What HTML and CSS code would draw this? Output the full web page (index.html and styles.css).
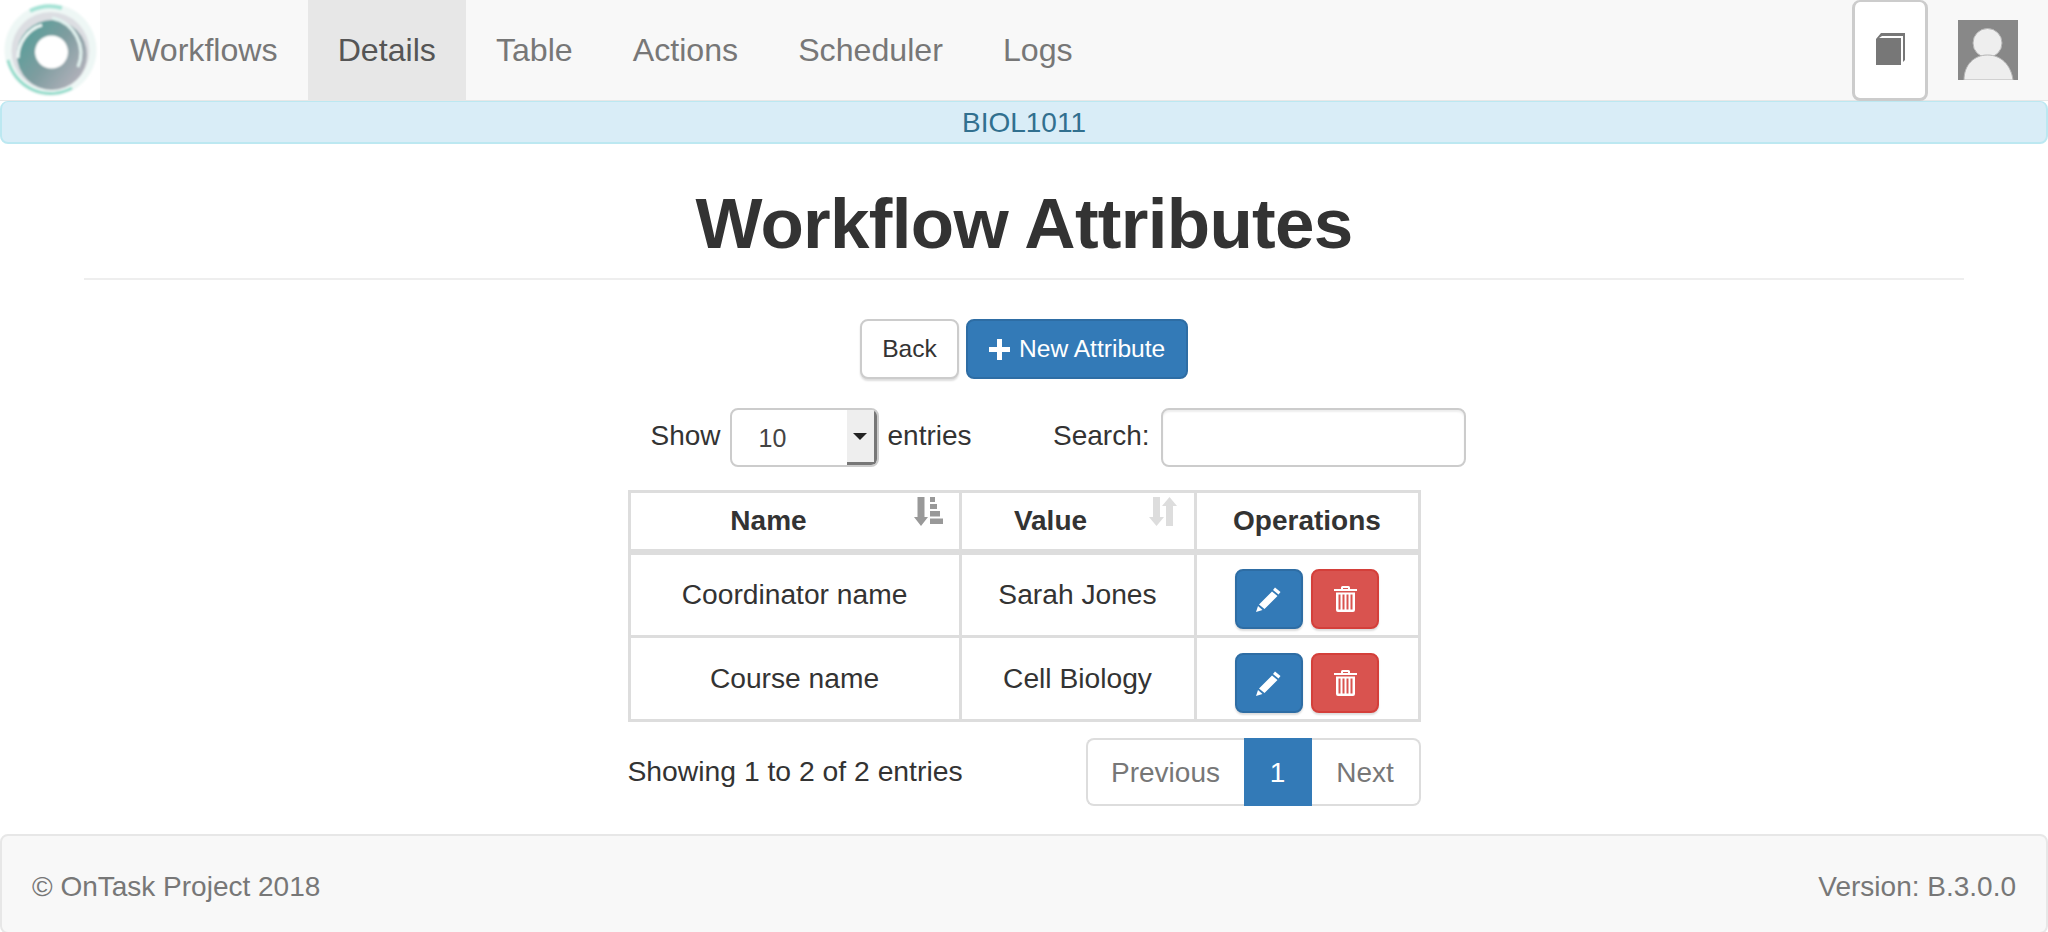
FILE: index.html
```html
<!DOCTYPE html>
<html lang="en">
<head>
    <meta charset="UTF-8">
    <meta name="viewport" content="width=device-width, initial-scale=1.0">
    <title>Workflow Attributes</title>
    <link rel="stylesheet" href="styles.css">
</head>
<body>
    <!-- Barra de navegacion -->
    <nav class="navbar">
        <a class="brand" href="#">
            <svg width="100" height="100" viewBox="0 0 100 100">
                <defs>
                    <filter id="soft" x="-20%" y="-20%" width="140%" height="140%"><feGaussianBlur stdDeviation="1.3"/></filter>
                    <linearGradient id="disc" x1="0.1" y1="0.2" x2="0.9" y2="0.8">
                        <stop offset="0" stop-color="#5a9f9a"/>
                        <stop offset="0.5" stop-color="#7f9da0"/>
                        <stop offset="1" stop-color="#afb0b9"/>
                    </linearGradient>
                </defs>
                <g filter="url(#soft)">
                    <circle cx="50.500" cy="50" r="46" fill="#eef7f5"/>
                    <path d="M8 60 A44 44 0 0 0 72 88" fill="none" stroke="#93dccb" stroke-width="3"/>
                    <path d="M30 11 A44 44 0 0 1 62 8" fill="none" stroke="#a5e3d6" stroke-width="4"/>
                    <circle cx="50.500" cy="51" r="39" fill="#dcdee2"/>
                    <circle cx="52" cy="55" r="35" fill="url(#disc)"/>
                    <path d="M18 58 A33 34 0 0 1 42 25" fill="none" stroke="#eef8f6" stroke-width="3"/>
                    <path d="M52 18 A36 36 0 0 1 78 67" fill="none" stroke="#e2f3f0" stroke-width="3"/>
                    <circle cx="51.500" cy="52" r="16.500" fill="#fff"/>
                </g>
            </svg>
        </a>
        <ul class="nav-tabs">
            <li><a href="#">Workflows</a></li>
            <li class="active"><a href="#">Details</a></li>
            <li><a href="#">Table</a></li>
            <li><a href="#">Actions</a></li>
            <li><a href="#">Scheduler</a></li>
            <li><a href="#">Logs</a></li>
        </ul>
        <a class="doc-btn" href="#">
            <svg width="29" height="32" viewBox="0 0 29 32">
                <path d="M0 6 L5 0 H29 V27 L27 29 V3 H6 L3 5 H25 V32 H0 Z" fill="#777"/>
            </svg>
        </a>
        <a class="avatar" href="#">
            <svg width="60" height="60" viewBox="0 0 60 60">
                <rect width="60" height="60" fill="#888"/>
                <circle cx="29.500" cy="23" r="14.500" fill="#eee" stroke="#b5b5b5" stroke-width="1"/>
                <path d="M6 60 C6 45 16 35 29.500 35 C43 35 53 45 55 60 Z" fill="#eee" stroke="#b5b5b5" stroke-width="1"/>
            </svg>
        </a>
    </nav>
    <div class="wf-alert">BIOL1011</div>

    <div class="page-header">
        <h1>Workflow Attributes</h1>
    </div>

    <div class="toolbar">
        <button class="btn btn-default">Back</button>
        <button class="btn btn-primary">
            <svg class="ico-plus" width="21" height="21" viewBox="0 0 21 21"><path d="M8 0 H13 V8 H21 V13 H13 V21 H8 V13 H0 V8 H8 Z" fill="#fff"/></svg>
            New Attribute
        </button>
    </div>

    <div class="dt-wrap">
        <div class="dt-filter">
            <div class="dt-group">
                <span class="dt-label">Show</span>
                <div class="fake-select">
                    <span class="fake-value">10</span>
                    <span class="fake-arrow"><i></i></span>
                </div>
                <span class="dt-label">entries</span>
            </div>
            <div class="dt-group dt-search">
                <span class="dt-label">Search:</span>
                <input type="text">
            </div>
        </div>

        <table class="dt-table">
            <thead>
                <tr>
                    <th class="col-name">Name
                        <svg class="sort-ico sort-on" width="29" height="30" viewBox="0 0 29 30">
                            <path d="M3.500 0 H10.500 V20 H14 L7 29 L0 20 H3.500 Z M16 0 H21 V5 H16 Z M16 7 H23 V12 H16 Z M16 14 H26 V19.500 H16 Z M16 21.500 H29 V27 H16 Z"/>
                        </svg>
                    </th>
                    <th class="col-value">Value
                        <svg class="sort-ico sort-off" width="29" height="30" viewBox="0 0 29 30">
                            <path d="M4 0 H11 V20 H15 L7.500 29 L0 20 H4 Z M17 29 V9 H13 L20.500 0 L28 9 H24 V29 Z"/>
                        </svg>
                    </th>
                    <th class="col-ops">Operations</th>
                </tr>
            </thead>
            <tbody>
                <tr>
                    <td>Coordinator name</td>
                    <td>Sarah Jones</td>
                    <td>
                        <div class="ops">
                            <button class="btn-op btn-primary"><svg width="26" height="26" viewBox="0 0 26 26"><path d="M19 1.500 L24.500 6 L22.500 8.500 L17 4 Z M16 5.500 L21.500 10 L8.500 23 L3 18.500 Z M2 20 L6.500 24 L0 26 Z" fill="#fff"/></svg></button>
                            <button class="btn-op btn-danger"><svg width="23" height="26" viewBox="0 0 23 26"><path fill="#fff" fill-rule="evenodd" d="M7 3 V1.500 Q7 0 8.500 0 H14.500 Q16 0 16 1.500 V3 H23 V5 H0 V3 Z M9 3 H14 V2 H9 Z M2 6.500 H21 V24 Q21 26 19 26 H4 Q2 26 2 24 Z M4.500 8.500 V23.500 H6.500 V8.500 Z M8.500 8.500 V23.500 H10.500 V8.500 Z M12.500 8.500 V23.500 H14.500 V8.500 Z M16.500 8.500 V23.500 H18.500 V8.500 Z"/></svg></button>
                        </div>
                    </td>
                </tr>
                <tr>
                    <td>Course name</td>
                    <td>Cell Biology</td>
                    <td>
                        <div class="ops">
                            <button class="btn-op btn-primary"><svg width="26" height="26" viewBox="0 0 26 26"><path d="M19 1.500 L24.500 6 L22.500 8.500 L17 4 Z M16 5.500 L21.500 10 L8.500 23 L3 18.500 Z M2 20 L6.500 24 L0 26 Z" fill="#fff"/></svg></button>
                            <button class="btn-op btn-danger"><svg width="23" height="26" viewBox="0 0 23 26"><path fill="#fff" fill-rule="evenodd" d="M7 3 V1.500 Q7 0 8.500 0 H14.500 Q16 0 16 1.500 V3 H23 V5 H0 V3 Z M9 3 H14 V2 H9 Z M2 6.500 H21 V24 Q21 26 19 26 H4 Q2 26 2 24 Z M4.500 8.500 V23.500 H6.500 V8.500 Z M8.500 8.500 V23.500 H10.500 V8.500 Z M12.500 8.500 V23.500 H14.500 V8.500 Z M16.500 8.500 V23.500 H18.500 V8.500 Z"/></svg></button>
                        </div>
                    </td>
                </tr>
            </tbody>
        </table>

        <div class="dt-bottom">
            <div class="dt-info">Showing 1 to 2 of 2 entries</div>
            <ul class="pagination">
                <li class="page-prev">Previous</li>
                <li class="page-cur">1</li>
                <li class="page-next">Next</li>
            </ul>
        </div>
    </div>

    <footer class="footer">
        <span>© OnTask Project 2018</span>
        <span>Version: B.3.0.0</span>
    </footer>
</body>
</html>
```

FILE: styles.css
```css
* {
    margin: 0;
    padding: 0;
    box-sizing: border-box;
}

body {
    font-family: "Liberation Sans", Arial, sans-serif;
    font-size: 28px;
    color: #333;
    background-color: #fff;
}

a {
    text-decoration: none;
    color: inherit;
}

/* navbar */
.navbar {
    display: flex;
    height: 101px;
    background-color: #f8f8f8;
    border-bottom: 1px solid #e7e7e7;
}

.brand {
    width: 100px;
    height: 100px;
    background-color: #fff;
}

.brand svg {
    display: block;
}

.nav-tabs {
    display: flex;
    list-style: none;
    flex: 1;
}

.nav-tabs a {
    display: block;
    height: 100px;
    line-height: 101px;
    padding: 0 30px;
    font-size: 32.15px;
    color: #777;
}

.nav-tabs .active a {
    background-color: #e7e7e7;
    color: #555;
}

.doc-btn {
    display: flex;
    align-items: center;
    justify-content: center;
    width: 76px;
    height: 101px;
    padding-bottom: 2px;
    background-color: #fff;
    border: 3px solid #ccc;
    border-top-width: 2px;
    border-radius: 8px;
}

.avatar {
    margin: 20px 30px 0 30px;
    height: 60px;
}

.avatar svg {
    display: block;
}

.wf-alert {
    height: 43px;
    line-height: 42px;
    text-align: center;
    color: #31708f;
    background-color: #d9edf7;
    border: 2px solid #bce8f1;
    border-top-width: 1px;
    border-radius: 8px;
}

/* titulo */
.page-header {
    margin: 0 84px;
    height: 136px;
    padding-top: 30px;
    border-bottom: 2px solid #eee;
}

.page-header h1 {
    font-size: 71px;
    font-weight: 700;
    letter-spacing: -0.7px;
    line-height: 100px;
    text-align: center;
}

/* botones */
.toolbar {
    display: flex;
    justify-content: center;
    gap: 7px;
    margin-top: 39px;
}

.btn {
    height: 60px;
    font-family: inherit;
    font-size: 24.6px;
    border-radius: 8px;
    cursor: pointer;
}

.btn-default {
    width: 99px;
    color: #333;
    background-color: #fff;
    border: 2px solid #ccc;
    box-shadow: 0 2px 2px #ddd;
}

.btn-primary {
    color: #fff;
    background-color: #337ab7;
    border: 2px solid #2e6da4;
}

.toolbar .btn-primary {
    display: flex;
    align-items: center;
    gap: 9px;
    width: 222px;
    padding-left: 21px;
}

.btn-danger {
    background-color: #d9534f;
    border: 2px solid #d43f3a;
}

/* tabla */
.dt-wrap {
    width: 793px;
    margin: 29px auto 0;
}

.dt-filter {
    display: flex;
    justify-content: space-between;
    align-items: center;
    width: 815px;
    margin-left: 23px;
    height: 59px;
}

.dt-group {
    display: flex;
    align-items: center;
    gap: 9px;
}

.dt-label {
    margin-bottom: 3px;
}

.dt-search {
    gap: 11px;
}

.fake-select {
    display: flex;
    width: 149px;
    height: 59px;
    background-color: #fff;
    border: 2px solid #ccc;
    border-radius: 8px;
    overflow: hidden;
}

.fake-value {
    flex: 1;
    padding-left: 27px;
    font-size: 25px;
    line-height: 56px;
    color: #444;
}

.fake-arrow {
    display: flex;
    align-items: center;
    justify-content: center;
    width: 30px;
    background-color: #eee;
    border-right: 3px solid #777;
    border-bottom: 3px solid #777;
}

.fake-arrow i {
    width: 0;
    height: 0;
    border-left: 7px solid transparent;
    border-right: 7px solid transparent;
    border-top: 7px solid #222;
}

.dt-search input {
    width: 305px;
    height: 59px;
    border: 2px solid #ccc;
    border-radius: 8px;
    box-shadow: inset 0 2px 2px #eee;
    background-color: #fff;
}

.dt-table {
    width: 793px;
    margin-top: 23px;
    border-collapse: collapse;
    table-layout: fixed;
    border: 3px solid #ddd;
    text-align: center;
}

.dt-table th,
.dt-table td {
    border: 3px solid #ddd;
}

.dt-table th {
    position: relative;
    height: 60px;
    border-bottom-width: 6px;
}

.dt-table td {
    height: 85px;
    font-size: 28.2px;
}

.dt-table tr:last-child td {
    height: 84px;
}

.col-name { width: 331px; padding-right: 52px; }
.col-value { width: 235px; padding-right: 54px; }

.sort-ico {
    position: absolute;
    top: 4px;
    right: 16px;
}

.sort-on { fill: #999; }
.sort-off { fill: #ddd; }

.ops {
    display: flex;
    justify-content: center;
    gap: 8px;
    padding-top: 9px;
}

.btn-op {
    display: flex;
    align-items: center;
    justify-content: center;
    width: 68px;
    height: 60px;
    border-radius: 8px;
    box-shadow: 0 2px 2px #ddd;
    cursor: pointer;
}

/* pie de tabla */
.dt-bottom {
    display: flex;
    justify-content: space-between;
    align-items: center;
    margin-top: 16px;
    height: 68px;
}

.dt-info {
    font-size: 28.3px;
    margin-bottom: 1px;
}

.pagination {
    display: flex;
    list-style: none;
    height: 68px;
    line-height: 66px;
    text-align: center;
    color: #777;
}

.pagination li {
    border: 2px solid #ddd;
    background-color: #fff;
}

.page-prev {
    width: 158px;
    border-right: 0 !important;
    border-radius: 8px 0 0 8px;
}

.page-cur {
    width: 68px;
    color: #fff;
    background-color: #337ab7 !important;
    border-color: #337ab7 !important;
}

.page-next {
    width: 109px;
    border-left: 0 !important;
    border-radius: 0 8px 8px 0;
}

/* footer */
.footer {
    display: flex;
    justify-content: space-between;
    align-items: center;
    height: 100px;
    margin-top: 28px;
    padding: 6px 30px 0;
    color: #777;
    background-color: #f8f8f8;
    border: 2px solid #e7e7e7;
    border-radius: 8px;
}
```
